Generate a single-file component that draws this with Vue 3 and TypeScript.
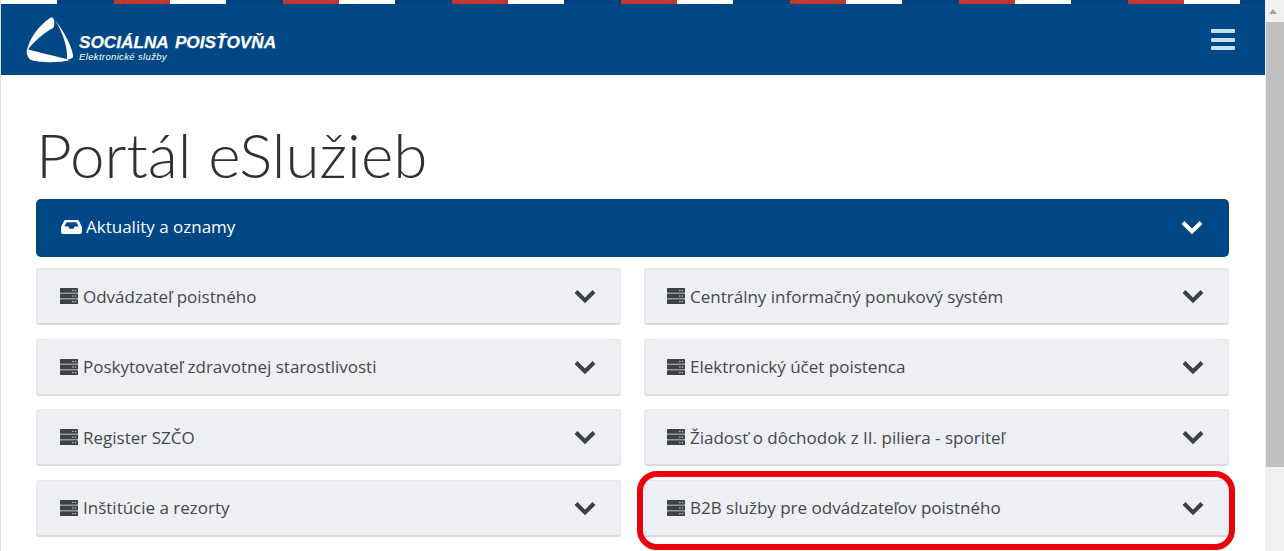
<script setup lang="ts">
const services = [
  'Odvádzateľ poistného',
  'Centrálny informačný ponukový systém',
  'Poskytovateľ zdravotnej starostlivosti',
  'Elektronický účet poistenca',
  'Register SZČO',
  'Žiadosť o dôchodok z II. piliera - sporiteľ',
  'Inštitúcie a rezorty',
  'B2B služby pre odvádzateľov poistného',
]
</script>

<template>
  <div class="page">
    <div class="content">
      <div class="stripe"></div>
      <header class="header">
        <a class="logo">
          <svg class="logo-mark" viewBox="0 0 48 46" width="48" height="46">
            <path fill="#fff" d="M24 1 C26 0 28 1 28 3 C28.500 6 28.500 10 27 11 C19 15 8 24 1 34 C2 24 12 9 24 1Z" />
            <path fill="#fff" d="M29 3 C36 12 45 26 47 38 C47.500 41 46 42 41 42 C42 30 36 14 29 3Z" />
            <path fill="#fff" d="M1 32 C14 36 30 39 44 43 C34 46 14 46 5 43 C2 41 0 37 1 32Z" />
          </svg>
          <span class="logo-text">
            <strong>SOCIÁLNA POISŤOVŇA</strong>
            <em>Elektronické služby</em>
          </span>
        </a>
        <button class="burger" aria-label="Menu">
          <span></span><span></span><span></span>
        </button>
      </header>

      <main class="main">
        <h1>Portál eSlužieb</h1>

        <div class="news">
          <span class="row-label">
            <svg class="icon-inbox" viewBox="0 0 21 14" width="21" height="14">
              <path fill="#fff" fill-rule="evenodd" d="M5 0 H16 C17 0 17.600 .4 18 1 L21 7 V12 C21 13.200 20.200 14 19 14 H2 C.8 14 0 13.200 0 12 V7 L3 1 C3.400 .4 4 0 5 0Z M5.600 2.200 L3.400 6.500 H7.400 L8.500 8.800 H12.500 L13.600 6.500 H17.600 L15.400 2.200Z" />
            </svg>
            Aktuality a oznamy
          </span>
          <svg class="chevron" viewBox="0 0 24 16" width="24" height="16">
            <path d="M3 3.500 L12 12.500 L21 3.500" fill="none" stroke="#fff" stroke-width="4" />
          </svg>
        </div>

        <div class="grid">
          <div v-for="name in services" :key="name" class="card">
            <span class="row-label">
              <svg class="icon-server" viewBox="0 0 18 16" width="18" height="16">
                <g v-for="y in [0, 5.600, 11.200]" :key="y">
                  <rect :y="y" width="18" height="4.800" rx=".6" fill="#3d4044" />
                  <rect x="12.200" :y="y + 1.800" width="1.300" height="1.300" fill="#c8c9cc" />
                  <rect x="14.800" :y="y + 1.800" width="1.300" height="1.300" fill="#c8c9cc" />
                </g>
              </svg>
              {{ name }}
            </span>
            <svg class="chevron" viewBox="0 0 24 16" width="24" height="16">
              <path d="M3 3.500 L12 12.500 L21 3.500" fill="none" stroke="#3d4044" stroke-width="4" />
            </svg>
          </div>
        </div>
      </main>
      <div class="highlight"></div>
    </div>

    <aside class="scrollbar">
      <div class="arrow"></div>
      <div class="thumb"></div>
    </aside>
  </div>
</template>

<style>
html,
body {
  margin: 0;
  overflow: hidden;
  background: #fff;
}
</style>

<style scoped>
.page {
  display: flex;
  width: 1284px;
  height: 551px;
  overflow: hidden;
  background: #ddd;
  font-family: "Open Sans", Arial, sans-serif;
  color: #44474b;
}

.content {
  position: relative;
  width: 1264px;
  margin-left: 1px;
  height: 551px;
  overflow: hidden;
  background: #fff;
}

.stripe {
  height: 4px;
  background: repeating-linear-gradient(90deg, #fff 0, #fff 56.300px, #00427f 56.300px, #00427f 112.600px, #c0392f 112.600px, #c0392f 169px);
}

.header {
  height: 71px;
  background: #004785;
  display: flex;
  align-items: center;
  justify-content: space-between;
  padding: 0 30px 0 25px;
}

.logo {
  display: flex;
  align-items: flex-end;
}

.logo-mark {
  margin-bottom: -1px;
}

.logo-text {
  display: flex;
  flex-direction: column;
  margin-left: 5px;
  color: #fff;
  font-family: "Liberation Sans", Arial, sans-serif;
  font-style: italic;
}

.logo-text strong {
  font-size: 17.200px;
  line-height: 19px;
  font-weight: 700;
  word-spacing: 2px;
  white-space: nowrap;
  -webkit-text-stroke: .25px #fff;
}

.logo-text em {
  font-size: 9.500px;
  line-height: 10px;
  letter-spacing: .35px;
}

.burger {
  display: flex;
  flex-direction: column;
  gap: 4.500px;
  width: 24px;
  padding: 0;
  border: 0;
  background: transparent;
}

.burger span {
  height: 4px;
  border-radius: 1px;
  background: #c4e0f7;
}

.main {
  width: 1193px;
  margin-left: 35px;
}

h1 {
  margin: 40px 0 0;
  height: 84px;
  font-family: Lato, "Open Sans", sans-serif;
  font-size: 62px;
  line-height: 78px;
  font-weight: 300;
  color: #2d3136;
}

.news {
  display: flex;
  align-items: center;
  justify-content: space-between;
  height: 58px;
  margin-bottom: 11px;
  padding: 0 25px;
  box-sizing: border-box;
  border-radius: 5px;
  background: #004785;
  color: #fff;
  font-size: 17px;
  line-height: 22px;
}

.news .row-label {
  margin-top: -2px;
  gap: 4px;
}

.news .chevron {
  margin-top: -2px;
}

.row-label {
  display: flex;
  align-items: center;
  gap: 5px;
}

.grid {
  display: grid;
  grid-template-columns: repeat(2, 585px);
  column-gap: 23px;
  row-gap: 13.500px;
}

.card {
  display: flex;
  align-items: center;
  justify-content: space-between;
  height: 57px;
  padding: 0 23px;
  box-sizing: border-box;
  border: 1px solid #e6e6e8;
  border-bottom: 2px solid #dcdcde;
  border-radius: 3px;
  background: #eeeff3;
  font-size: 17px;
}

.card:nth-child(even) {
  padding-left: 22px;
}

.highlight {
  position: absolute;
  left: 636px;
  top: 471px;
  width: 586px;
  height: 67px;
  border: 6px solid #e8000d;
  border-radius: 20px;
}

.scrollbar {
  position: relative;
  width: 19px;
  height: 551px;
  background: #f0f0f0;
}

.arrow {
  position: absolute;
  left: 4px;
  top: 9px;
  width: 0;
  height: 0;
  border-left: 4px solid transparent;
  border-right: 4px solid transparent;
  border-bottom: 5px solid #a3a3a3;
}

.thumb {
  position: absolute;
  left: 1px;
  top: 22px;
  width: 18px;
  height: 445px;
  background: #c0c0c0;
}
</style>
